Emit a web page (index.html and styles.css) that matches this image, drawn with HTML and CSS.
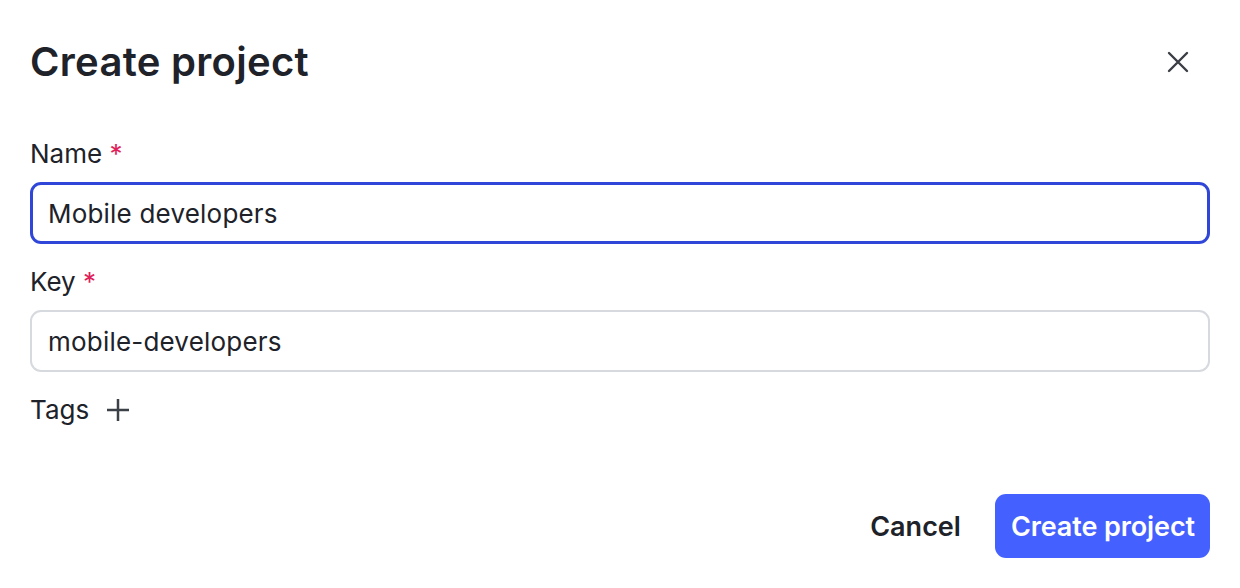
FILE: index.html
```html
<!DOCTYPE html>
<html lang="en">
<head>
<meta charset="utf-8">
<title>Create project</title>
<link rel="stylesheet" href="styles.css">
</head>
<body>
<div class="dialog">
  <div class="header">
    <h1 class="title">Create project</h1>
    <button class="close" aria-label="Close">
      <svg width="22" height="22" viewBox="0 0 22 22"><path d="M2 2 L20 20 M20 2 L2 20" stroke="#3a3d43" stroke-width="2.4" stroke-linecap="round" fill="none"/></svg>
    </button>
  </div>
  <div class="field">
    <label class="label">Name <span class="req">*</span></label>
    <div class="input focused">Mobile developers</div>
  </div>
  <div class="field">
    <label class="label">Key <span class="req">*</span></label>
    <div class="input">mobile-developers</div>
  </div>
  <div class="tags">
    <span class="label">Tags</span>
    <svg class="plus" width="22" height="22" viewBox="0 0 22 22"><path d="M11 0 V22 M0 11 H22" stroke="#3c4047" stroke-width="2.5" fill="none"/></svg>
  </div>
  <div class="footer">
    <button class="btn cancel">Cancel</button>
    <button class="btn primary">Create project</button>
  </div>
</div>
</body>
</html>
```

FILE: styles.css
```css
html, body {
  margin: 0;
  padding: 0;
  background: #ffffff;
}
body {
  font-family: "Inter", "Noto Sans", sans-serif;
  color: #202229;
}
.dialog {
  padding: 38px 30px 0 30px;
  display: flex;
  flex-direction: column;
}
.header {
  display: flex;
  align-items: center;
  justify-content: space-between;
  height: 48px;
  margin-bottom: 50px;
}
.title {
  margin: 0;
  font-size: 40px;
  line-height: 48px;
  font-weight: 600;
  letter-spacing: 0.3px;
}
.close {
  width: 40px;
  height: 40px;
  margin-right: 12px;
  border: none;
  background: none;
  padding: 0;
  display: flex;
  align-items: center;
  justify-content: center;
}
.field {
  display: flex;
  flex-direction: column;
  margin-bottom: 20px;
}
.label {
  font-size: 26px;
  line-height: 36px;
  font-weight: 400;
  margin-bottom: 10px;
}
.req {
  color: #e01e5a;
  margin-left: 0;
}
.input {
  box-sizing: border-box;
  height: 62px;
  border: 2px solid #d6d9de;
  border-radius: 11px;
  padding: 0 16px;
  display: flex;
  align-items: center;
  font-size: 26px;
  letter-spacing: 0.2px;
}
.input.focused {
  border: 3px solid #2f46d8;
  padding: 0 15px;
}
.tags {
  display: flex;
  align-items: center;
  gap: 18px;
  height: 36px;
}
.tags .label {
  margin-bottom: 0;
}
.footer {
  display: flex;
  justify-content: flex-end;
  align-items: center;
  gap: 18px;
  margin-top: 66px;
}
.btn {
  font-family: "Inter", "Noto Sans", sans-serif;
  font-size: 27px;
  font-weight: 600;
  height: 64px;
  border: none;
  border-radius: 11px;
  padding: 0 16px;
  background: none;
  color: #202229;
}
.btn.cancel {
  padding: 0 16px 0 0;
}
.btn.primary {
  background: #4460ff;
  color: #ffffff;
  padding: 0 15px 0 16px;
  letter-spacing: -0.1px;
}
```
